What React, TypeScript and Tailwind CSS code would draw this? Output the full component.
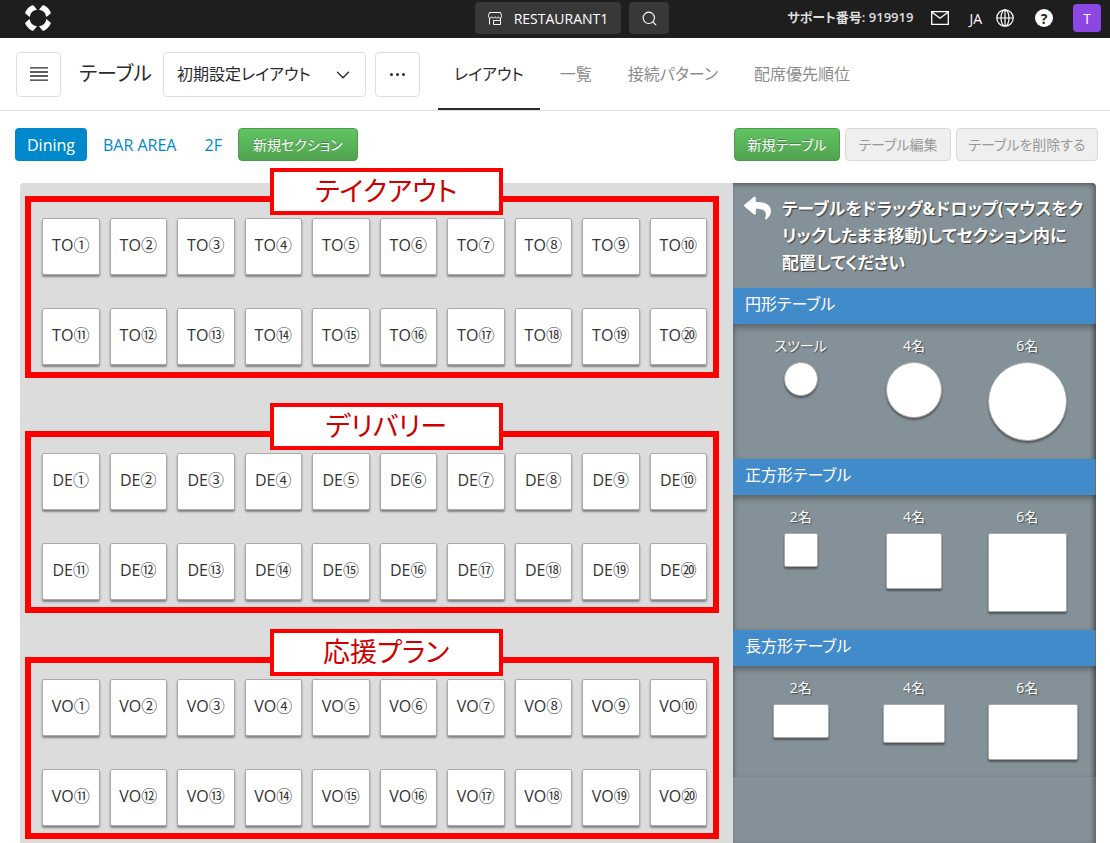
import { useState } from 'react';
import clsx from 'clsx';
import { ChevronDown, Search } from 'lucide-react';
import { FaReply } from 'react-icons/fa';

type TableGroup = { prefix: string; label: string; spacing: string };

type Shape = { label: string; className: string };

type Palette = { title: string; height: string; shapes: Shape[] };

const NUMBERS = '①②③④⑤⑥⑦⑧⑨⑩⑪⑫⑬⑭⑮⑯⑰⑱⑲⑳'.split('');

const GROUPS: TableGroup[] = [
  { prefix: 'TO', label: 'テイクアウト', spacing: 'mt-3' },
  { prefix: 'DE', label: 'デリバリー', spacing: 'mt-[53px]' },
  { prefix: 'VO', label: '応援プラン', spacing: 'mt-11' },
];

const PALETTES: Palette[] = [
  {
    title: '円形テーブル',
    height: 'h-[135px]',
    shapes: [
      { label: 'スツール', className: 'size-[34px] rounded-full' },
      { label: '4名', className: 'size-14 rounded-full' },
      { label: '6名', className: 'size-[79px] rounded-full' },
    ],
  },
  {
    title: '正方形テーブル',
    height: 'h-[135px]',
    shapes: [
      { label: '2名', className: 'size-[34px] rounded-xs' },
      { label: '4名', className: 'size-14 rounded-xs' },
      { label: '6名', className: 'size-[79px] rounded-xs' },
    ],
  },
  {
    title: '長方形テーブル',
    height: 'h-[111px]',
    shapes: [
      { label: '2名', className: 'h-[34px] w-14 rounded-xs' },
      { label: '4名', className: 'h-[39px] w-[62px] rounded-xs' },
      { label: '6名', className: 'h-14 w-[90px] rounded-xs' },
    ],
  },
];

const TABS = ['レイアウト', '一覧', '接続パターン', '配席優先順位'];
const SECTIONS = ['Dining', 'BAR AREA', '2F'];

function Logo() {
  return (
    <svg viewBox="0 0 26 26" className="size-[26px]" fill="white" aria-hidden="true">
      {[0, 90, 180, 270].map((angle) => (
        <path
          key={angle}
          transform={`rotate(${angle} 13 13)`}
          d="M.3 7.200Q2.500 2.500 7.200.3Q8.200 0 8.800.7L12 4.700A8.500 8.500 0 0 0 4.700 12L.7 8.800Q0 8.200.3 7.200z"
        />
      ))}
    </svg>
  );
}

function StoreIcon() {
  return (
    <svg viewBox="0 0 14 13" className="h-[13px] w-[14px]" fill="none" stroke="currentColor" strokeWidth="1" aria-hidden="true">
      <path d="M1.500.5h11l1 3v1.200c0 .8-.6 1.300-1.500 1.300s-1.700-.5-1.700-1.300c0 .8-.7 1.300-1.600 1.300S7 5.500 7 4.700C7 5.500 6.200 6 5.300 6S3.700 5.500 3.700 4.700C3.700 5.500 2.900 6 2 6S.5 5.500.5 4.700V3.500z" />
      <path d="M1.500 6v6.500M12.500 6v6.500H5.500V8.500h4M12.500 8.500h-3" />
    </svg>
  );
}

function MailIcon() {
  return (
    <svg viewBox="0 0 18 14" className="h-[14px] w-[18px]" fill="none" stroke="currentColor" strokeWidth="1.3" aria-hidden="true">
      <path d="M.7.7h16.600v12.600H.7zM.7.9L9 7.200L17.300.9" />
    </svg>
  );
}

function GlobeIcon() {
  return (
    <svg viewBox="0 0 18 18" className="size-[18px]" fill="none" stroke="currentColor" strokeWidth="1.2" aria-hidden="true">
      <circle cx="9" cy="9" r="8.2" />
      <ellipse cx="9" cy="9" rx="4" ry="8.200" />
      <path d="M.8 9h16.400M9 .8v16.400" />
    </svg>
  );
}

function TopBar() {
  return (
    <header className="flex h-[38px] items-center bg-[#1e1e1e] text-white">
      <div className="flex-1 pl-[25px]">
        <a href="#" aria-label="Home" className="mb-0.5 block w-[26px]">
          <Logo />
        </a>
      </div>
      <div className="mb-0.5 flex gap-2">
        <button className="flex h-8 w-[146px] items-center justify-center gap-3 rounded bg-[#383838] text-[14px] font-medium">
          <StoreIcon />
          RESTAURANT1
        </button>
        <button aria-label="検索" className="flex h-8 w-10 items-center justify-center rounded bg-[#383838]">
          <Search size={17} strokeWidth={1.5} />
        </button>
      </div>
      <div className="flex w-[441px] items-center justify-end pr-[9px] pb-0.5 text-[14px]">
        <span className="mr-[18px] text-[13px] font-semibold text-[#dddddd]">サポート番号: 919919</span>
        <button aria-label="メッセージ" className="mr-5">
          <MailIcon />
        </button>
        <button className="mr-[21px] flex items-center gap-3.5">
          JA
          <GlobeIcon />
        </button>
        <button
          aria-label="ヘルプ"
          className="mr-5 flex size-[18px] items-center justify-center rounded-full bg-white text-[14px] font-bold text-[#1e1e1e]"
        >
          ?
        </button>
        <button className="size-7 rounded bg-[#8c46e4] text-[14px]">T</button>
      </div>
    </header>
  );
}

function NavBar() {
  const [tab, setTab] = useState(TABS[0]);

  return (
    <nav className="flex h-[73px] items-stretch border-b border-[#e3e3e3] text-[#2b2b2b]">
      <div className="flex items-center pl-4">
        <button aria-label="メニュー" className="flex size-[45px] items-center justify-center rounded border border-[#e0e0e0]">
          <svg viewBox="0 0 18 14" className="h-[14px] w-[18px]" stroke="currentColor" strokeWidth="1.3" aria-hidden="true">
            <path d="M0 .9h18M0 5h18M0 9h18M0 13.100h18" />
          </svg>
        </button>
        <h1 className="ml-[18px] w-[84px] text-[20px] whitespace-nowrap">テーブル</h1>
        <div className="relative">
          <select
            aria-label="レイアウト"
            className="h-[45px] w-[203px] appearance-none rounded border border-[#e0e0e0] bg-white pl-[13px] text-[16px]"
          >
            <option>初期設定レイアウト</option>
          </select>
          <ChevronDown size={22} strokeWidth={1.5} className="pointer-events-none absolute top-3 right-3" />
        </div>
        <button aria-label="その他" className="ml-[9px] flex size-[45px] items-center justify-center gap-[3px] rounded border border-[#e0e0e0]">
          <span className="size-[3px] rounded-full bg-[#2b2b2b]" />
          <span className="size-[3px] rounded-full bg-[#2b2b2b]" />
          <span className="size-[3px] rounded-full bg-[#2b2b2b]" />
        </button>
      </div>
      <div className="ml-[18px] flex gap-1">
        {TABS.map((name) => (
          <button
            key={name}
            onClick={() => setTab(name)}
            className={clsx(
              'border-y-2 border-t-transparent px-4 text-[16px] whitespace-nowrap',
              tab === name ? 'border-b-[#2b2b2b] text-[#2b2b2b]' : 'border-b-transparent text-[#8c8c8c]'
            )}
          >
            {name}
          </button>
        ))}
      </div>
    </nav>
  );
}

function Toolbar() {
  const [section, setSection] = useState(SECTIONS[0]);
  const green =
    'rounded border border-[#4c9c4c] bg-linear-to-b from-[#62c462] to-[#51a351] text-white text-shadow-[0_-1px_0_rgba(0,0,0,0.25)]';

  return (
    <div className="flex items-center justify-between pt-[17px] pr-3 pl-[15px] text-[14px] whitespace-nowrap">
      <div className="flex items-center gap-1">
        {SECTIONS.map((name) => (
          <button
            key={name}
            onClick={() => setSection(name)}
            className={clsx('h-[33px] rounded px-3 text-[16px]', section === name ? 'bg-[#0088cc] text-white' : 'text-[#0088cc]')}
          >
            {name}
          </button>
        ))}
        <button className={clsx('h-[33px] px-3.5', green)}>新規セクション</button>
      </div>
      <div className="flex gap-[5px]">
        <button className={clsx('h-[33px] w-[106px]', green)}>新規テーブル</button>
        <button disabled className="h-[33px] w-[106px] rounded border border-[#d8d8d8] bg-[#efefef] text-[#999999]">
          テーブル編集
        </button>
        <button disabled className="h-[33px] w-[142px] rounded border border-[#d8d8d8] bg-[#efefef] text-[#999999]">
          テーブルを削除する
        </button>
      </div>
    </div>
  );
}

function GroupFrame({ group }: { group: TableGroup }) {
  return (
    <section className={clsx('relative border-6 border-[#ff0000] pt-4 pr-1.5 pb-[7px] pl-[11px]', group.spacing)}>
      <h2 className="absolute -top-[34px] left-[35%] flex h-[47px] w-[233px] items-center justify-center border-4 border-[#ff0000] bg-white text-[27px] text-[#cc0000]">
        {group.label}
      </h2>
      <div className="grid grid-cols-10 gap-x-2.5 gap-y-[33px]">
        {NUMBERS.map((n) => (
          <button
            key={n}
            className="h-[57px] rounded-xs border border-[#aaaaaa] bg-white pb-1 text-[16px] whitespace-nowrap text-[#333333] shadow-[0_2px_2px_rgba(0,0,0,0.4)]"
          >
            {group.prefix}
            {n}
          </button>
        ))}
      </div>
    </section>
  );
}

function Sidebar() {
  return (
    <aside className="w-[363px] rounded-tr bg-[#849198] text-white shadow-[inset_-2px_2px_4px_rgba(0,0,0,0.35)]">
      <div className="flex h-[105px] gap-[11px] pt-3 pl-[11px]">
        <FaReply className="h-[26px] w-[27px] shrink-0" preserveAspectRatio="none" />
        <p className="text-[17px] leading-[27px] font-bold whitespace-nowrap text-shadow-[1px_1px_1px_rgba(0,0,0,0.6)]">
          テーブルをドラッグ&amp;ドロップ(マウスをク
          <br />
          リックしたまま移動)してセクション内に
          <br />
          配置してください
        </p>
      </div>
      {PALETTES.map((palette) => (
        <section key={palette.title}>
          <h3 className="mr-px flex h-9 items-center bg-[#428bca] pb-1 pl-3 text-[16px]">{palette.title}</h3>
          <div className={clsx('grid grid-cols-3 pt-2.5 pr-3 pl-[11px] shadow-[inset_0_3px_6px_rgba(0,0,0,0.35)]', palette.height)}>
            {palette.shapes.map((shape) => (
              <div key={shape.label} className="flex flex-col items-center">
                <span className="h-7 text-[14px] leading-6 text-shadow-[1px_1px_1px_rgba(0,0,0,0.5)]">{shape.label}</span>
                <div className="grid w-[79px] justify-items-center">
                  <div className={clsx('border border-[#aaaaaa] bg-white shadow-[0_2px_2px_rgba(0,0,0,0.4)]', shape.className)} />
                </div>
              </div>
            ))}
          </div>
        </section>
      ))}
    </aside>
  );
}

export default function App() {
  return (
    <div className="flex min-h-screen flex-col bg-white font-['Open_Sans','Noto_Sans_CJK_JP',sans-serif] [font-feature-settings:'palt']">
      <TopBar />
      <NavBar />
      <Toolbar />
      <main className="mt-[22px] flex grow pr-3.5 pl-5">
        <div className="grow rounded-tl bg-[#dcdcdc] pt-px pr-3.5 pl-[5px]">
          {GROUPS.map((group) => (
            <GroupFrame key={group.prefix} group={group} />
          ))}
        </div>
        <Sidebar />
      </main>
    </div>
  );
}
